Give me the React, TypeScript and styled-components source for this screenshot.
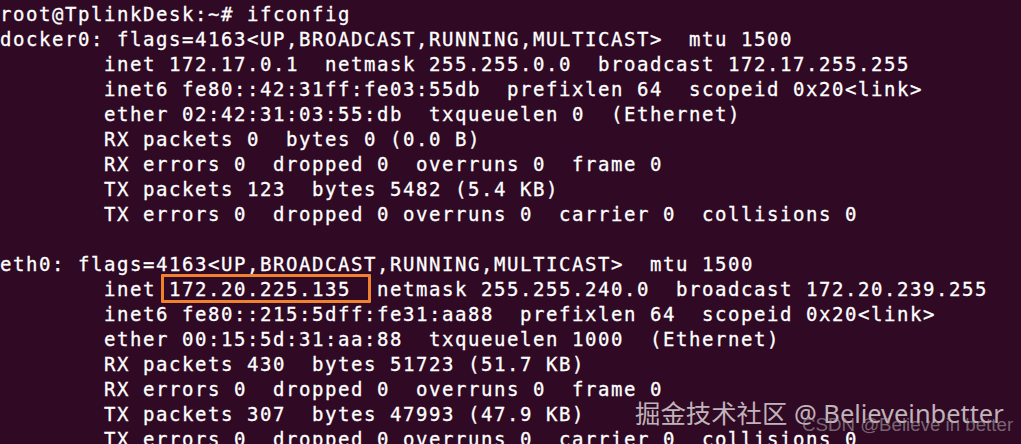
import React from "react";
import styled, { createGlobalStyle } from "styled-components";

const Global = createGlobalStyle`
  html, body { margin: 0; padding: 0; background: #300a24; }
  #root { width: 1021px; height: 444px; }
`;

const Terminal = styled.div`
  position: relative;
  width: 1021px;
  height: 444px;
  overflow: hidden;
  background: #300a24;
  box-sizing: border-box;
  padding: 2px 0 0 0;
`;

const Screen = styled.pre`
  margin: 0;
  font-family: "DejaVu Sans Mono", "Liberation Mono", monospace;
  font-size: 19px;
  letter-spacing: 1.561px;
  line-height: 25px;
  color: #ffffff;
  white-space: pre;
  -webkit-text-stroke: 0.3px #ffffff;
`;

const Line = styled.div`
  height: 25px;
`;

const Highlight = styled.div`
  position: absolute;
  left: 161px;
  top: 274px;
  width: 204px;
  height: 23px;
  border: 3px solid #f0822f;
  border-radius: 1px;
`;

const Watermark = styled.div`
  position: absolute;
  left: 635px;
  top: 397px;
  font-family: "Noto Sans", "Noto Sans CJK SC", sans-serif;
  font-size: 25.4px;
  line-height: 32px;
  color: rgba(225, 220, 222, 0.82);
  white-space: nowrap;
`;

const SubMark = styled.div`
  position: absolute;
  left: 802px;
  top: 413px;
  font-family: "Liberation Sans", "Noto Sans", sans-serif;
  font-size: 18.7px;
  line-height: 24px;
  color: rgba(170, 160, 166, 0.62);
  white-space: nowrap;
`;

const lines = [
  "root@TplinkDesk:~# ifconfig",
  "docker0: flags=4163<UP,BROADCAST,RUNNING,MULTICAST>  mtu 1500",
  "        inet 172.17.0.1  netmask 255.255.0.0  broadcast 172.17.255.255",
  "        inet6 fe80::42:31ff:fe03:55db  prefixlen 64  scopeid 0x20<link>",
  "        ether 02:42:31:03:55:db  txqueuelen 0  (Ethernet)",
  "        RX packets 0  bytes 0 (0.0 B)",
  "        RX errors 0  dropped 0  overruns 0  frame 0",
  "        TX packets 123  bytes 5482 (5.4 KB)",
  "        TX errors 0  dropped 0 overruns 0  carrier 0  collisions 0",
  "",
  "eth0: flags=4163<UP,BROADCAST,RUNNING,MULTICAST>  mtu 1500",
  "        inet 172.20.225.135  netmask 255.255.240.0  broadcast 172.20.239.255",
  "        inet6 fe80::215:5dff:fe31:aa88  prefixlen 64  scopeid 0x20<link>",
  "        ether 00:15:5d:31:aa:88  txqueuelen 1000  (Ethernet)",
  "        RX packets 430  bytes 51723 (51.7 KB)",
  "        RX errors 0  dropped 0  overruns 0  frame 0",
  "        TX packets 307  bytes 47993 (47.9 KB)",
  "        TX errors 0  dropped 0 overruns 0  carrier 0  collisions 0",
];

export default function App() {
  return (
    <>
      <Global />
      <Terminal>
        <Screen>
          {lines.map((l, i) => (
            <Line key={i}>{l}</Line>
          ))}
        </Screen>
        <Highlight />
        <Watermark>掘金技术社区 @ Believeinbetter</Watermark>
        <SubMark>CSDN @Believe in better</SubMark>
      </Terminal>
    </>
  );
}
